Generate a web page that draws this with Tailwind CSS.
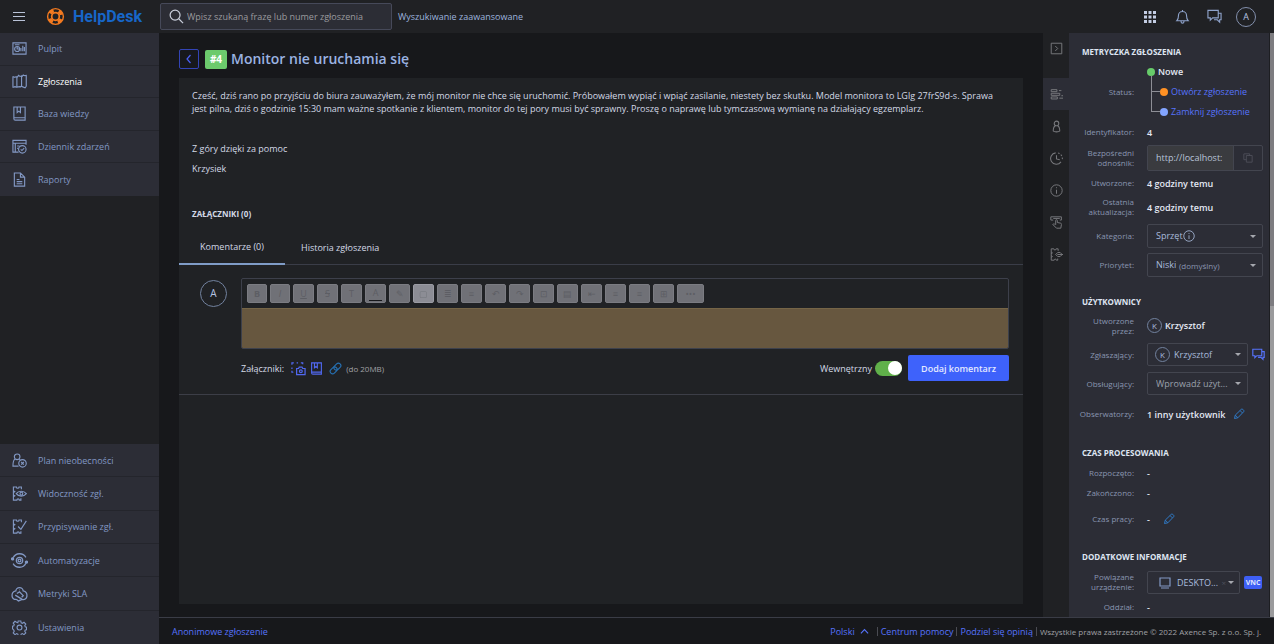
<!DOCTYPE html>
<html lang="pl">
<head>
<meta charset="utf-8">
<title>HelpDesk</title>
<script src="https://cdn.jsdelivr.net/npm/@tailwindcss/browser@4"></script>
</head>
<body class="flex h-screen flex-col overflow-hidden bg-[#17181b] font-['Open_Sans',sans-serif] text-[9px] leading-[13px] text-[#d3d9e6]">

<svg class="hidden">
  <symbol id="chat" viewBox="0 0 16 16"><path d="M1 1.500h11v8H6l-2.500 2.500V9.500H1zM12 4.500h3v7h-1.500V14l-2.500-2.500H7.500" /></symbol>
  <symbol id="pencil" viewBox="0 0 16 16"><path d="M2 14l1-4.500L11 1.800a1.300 1.300 0 0 1 2 0l1.200 1.200a1.300 1.300 0 0 1 0 2L6.500 13zM3 9.500L6.500 13M9.500 3.500l3 3"/></symbol>
  <symbol id="book" viewBox="0 0 16 16"><path d="M2 1h12v14H3.500A1.500 1.500 0 0 1 2 13.500zM2 12.500h12M5.500 1v6l1.800-1.500L9 7V1"/></symbol>
  <symbol id="info" viewBox="0 0 16 16"><circle cx="8" cy="8" r="7"/><path d="M8 7v5M8 4v1.200"/></symbol>
  <symbol id="ticket" viewBox="0 0 16 16"><path d="M9.500 13V15H7.800a1.300 1.300 0 0 0-2.600 0H1.500V1h3.200a1.400 1.400 0 0 0 2.800 0H10v2.500M1.500 5l1.500 1-1.500 1M1.500 9.500l1.500 1-1.500 1"/></symbol>
</svg>

<header class="flex h-[33px] shrink-0 items-center bg-[#202124]">
  <div class="flex w-[160px] items-center pl-[13px]">
    <button aria-label="Menu" class="flex w-[12px] flex-col gap-[3px]"><span class="h-px bg-[#b9c3d8]"></span><span class="h-px bg-[#b9c3d8]"></span><span class="h-px bg-[#b9c3d8]"></span></button>
    <svg class="ml-[21px] size-[19px]" viewBox="0 0 20 20" fill="none" stroke="#f37a20"><circle cx="10" cy="10" r="8.300" stroke-width="1.500"/><circle cx="10" cy="10" r="4" stroke-width="1.800"/><circle cx="10" cy="10" r="6.400" stroke-width="3.600" stroke-dasharray="4.500 5.550" stroke-dashoffset="-2.750"/></svg>
    <a href="#" class="ml-[8px] font-['Roboto',sans-serif] text-[16px] leading-5 font-bold text-[#1766c8]">HelpDesk</a>
  </div>
  <label class="flex h-[27px] w-[232px] items-center rounded-[2px] border border-[#464959] bg-[#2c2d35] pl-2">
    <svg class="size-[15px]" viewBox="0 0 16 16" fill="none" stroke="#c9cedb" stroke-width="1.300"><circle cx="6.500" cy="6.500" r="5.300"/><path d="M10.400 10.400L15 15"/></svg>
    <input type="search" aria-label="Szukaj" placeholder="Wpisz szukaną frazę lub numer zgłoszenia" class="ml-[3px] min-w-0 flex-1 bg-transparent outline-none placeholder:text-[#9b9b9f]">
  </label>
  <a href="#" class="ml-[6px] text-[#9db4df]">Wyszukiwanie zaawansowane</a>
  <div class="ml-auto flex items-center gap-[12px] pr-[18px] [&>button]:flex [&>button]:size-[20px] [&>button]:items-center [&>button]:justify-center">
    <button aria-label="Aplikacje"><svg class="size-[12px]" viewBox="0 0 12 12" fill="#c4cee4"><path d="M0 0h3v3H0zM4.500 0h3v3h-3zM9 0h3v3H9zM0 4.500h3v3H0zM4.500 4.500h3v3h-3zM9 4.500h3v3H9zM0 9h3v3H0zM4.500 9h3v3h-3zM9 9h3v3H9z"/></svg></button>
    <button aria-label="Powiadomienia"><svg class="size-[15px]" viewBox="0 0 16 16" fill="none" stroke="#8ea3cb" stroke-width="1.200"><path d="M2 12.500c1.500-1.500 1.700-3 1.700-5.500a4.300 4.300 0 0 1 8.600 0c0 2.500.2 4 1.700 5.500zM6.500 13v.5a1.500 1.500 0 0 0 3 0V13M8 2.500V1"/></svg></button>
    <button aria-label="Czat"><svg class="size-[15px]" fill="none" stroke="#8ea3cb" stroke-width="1.200"><use href="#chat"/></svg></button>
    <button class="rounded-full border border-[#8390ad] text-[#b5c4e3]">A</button>
  </div>
</header>

<div class="flex min-h-0 flex-1">
  <nav class="flex w-[159px] shrink-0 flex-col justify-between bg-[#202124] text-[#8298c4]">
    <div class="grid h-[163px] grid-rows-5 divide-y divide-[#24252c] bg-[#2c2d36]">
      <a href="#" class="flex items-center gap-[11px] pl-[12px]"><svg class="size-[15px]" viewBox="0 0 16 16" fill="none" stroke="currentColor" stroke-width="1.200"><path d="M1 2h14v12H1zM9.500 11V7.500M11.500 11V5M13.200 11V6.500M3 4h5"/><circle cx="5.500" cy="8.500" r="2.700"/><path d="M5.500 6v2.500H8"/></svg>Pulpit</a>
      <a href="#" class="flex items-center gap-[11px] pl-[12px] font-medium text-white"><svg class="size-[15px] text-[#8298c4]" viewBox="0 0 16 16" fill="none" stroke="currentColor" stroke-width="1.200"><path d="M1 3h1a1.200 1.200 0 0 0 2 0h1.200v11H4.200a1.200 1.200 0 0 0-2 0H1zM5.200 4L7 1.500l.8.600a1.200 1.200 0 0 0 1.600.2L10.200 2v10.500l-1 1.300-1-.3L5.200 14M10.200 3.500L12 1l.8.500a1.200 1.200 0 0 0 1.400.1L15.200 1.500V13l-1.200 1.800-3.800-1.600"/></svg>Zgłoszenia</a>
      <a href="#" class="flex items-center gap-[11px] pl-[12px]"><svg class="size-[15px]" fill="none" stroke="currentColor" stroke-width="1.200"><use href="#book"/></svg>Baza wiedzy</a>
      <a href="#" class="flex items-center gap-[11px] pl-[12px]"><svg class="size-[15px]" viewBox="0 0 16 16" fill="none" stroke="currentColor" stroke-width="1.200"><path d="M7 14H1V1.500h14V6M1 4.500h14M3.500 4.500V14M5.500 7.500h2.500M5.500 10h1"/><circle cx="11" cy="11" r="4"/><path d="M9.300 11l1.300 1.300L13 9.800"/></svg>Dziennik zdarzeń</a>
      <a href="#" class="flex items-center gap-[11px] pl-[12px]"><svg class="size-[15px]" viewBox="0 0 16 16" fill="none" stroke="currentColor" stroke-width="1.200"><path d="M2.500 1H9l4.500 4.500V15h-11zM9 1v4.500h4.500M5 8h3M5 10.300h6M5 12.500h6"/></svg>Raporty</a>
    </div>
    <div class="grid h-[200px] grid-rows-6 divide-y divide-[#24252c] bg-[#2c2d36]">
      <a href="#" class="flex items-center gap-[11px] pl-[12px]"><svg class="size-[15px]" viewBox="0 0 16 16" fill="none" stroke="currentColor" stroke-width="1.200"><circle cx="5.500" cy="4" r="3"/><path d="M3.300 6.300C1.500 7.500 1 10 1 14h6M7.700 6.300l1 1"/><circle cx="11.200" cy="11" r="4"/><path d="M9.800 9.600l2.800 2.800M12.600 9.600l-2.800 2.800"/></svg>Plan nieobecności</a>
      <a href="#" class="flex items-center gap-[11px] pl-[12px]"><svg class="size-[15px]" viewBox="0 0 16 16" fill="none" stroke="currentColor" stroke-width="1.200"><use href="#ticket"/><path d="M4.500 8.200C7 4.800 12.500 4.800 15.300 8.200 12.500 11.600 7 11.600 4.500 8.200z"/><circle cx="10" cy="8.200" r="1.500"/></svg>Widoczność zgł.</a>
      <a href="#" class="flex items-center gap-[11px] pl-[12px]"><svg class="size-[15px]" viewBox="0 0 16 16" fill="none" stroke="currentColor" stroke-width="1.200"><use href="#ticket"/><path d="M6.500 8l3 3L15.300 2"/></svg>Przypisywanie zgł.</a>
      <a href="#" class="flex items-center gap-[10px] pl-[11px]"><svg class="size-[17px]" viewBox="0 0 16 16" fill="none" stroke="currentColor" stroke-width="1.200"><path d="M2 5.500A6.800 6.800 0 0 1 14 5M14 10.500A6.800 6.800 0 0 1 2 11"/><circle cx="8" cy="8" r="3"/><circle cx="8" cy="8" r="1.300"/><circle cx="1.500" cy="6.500" r="1" fill="currentColor"/><circle cx="14.500" cy="9.500" r="1" fill="currentColor"/></svg>Automatyzacje</a>
      <a href="#" class="flex items-center gap-[10px] pl-[11px]"><svg class="size-[17px]" viewBox="0 0 16 16" fill="none" stroke="currentColor" stroke-width="1.200"><path d="M4.500 6a3.500 3.500 0 1 1 7 0M4.500 5.500C2 6 .8 8 1 10.500c.2 2 2 3.500 4 3M11.500 5.500C14 6 15.200 8 15 10.500c-.2 2.500-2.500 3.800-4.500 3L4 9.500M5 13.500l2 1.500 3.500-1.500M5.500 8L8 6.500l3.500 3.500L10 11.500M8 4.500h.5"/></svg>Metryki SLA</a>
      <a href="#" class="flex items-center gap-[11px] pl-[12px]"><svg class="size-[15px]" viewBox="0 0 16 16" fill="none" stroke="currentColor" stroke-width="1.200"><path d="M6.600 1h2.800l.4 2 1.300.5 1.700-1.100 1.900 1.900-1.100 1.700.5 1.300 1.400.4v2.700l-1.400.3-.5 1.300 1.100 1.700-1.900 1.900-1.700-1.100-1.300.5-.4 1.700H6.600l-.4-1.700-1.300-.5-1.700 1.100-1.900-1.900 1.100-1.700-.5-1.300L.6 9.400V6.700l1.300-.4.5-1.300-1.100-1.700 1.900-1.900 1.700 1.100L6.200 3z"/><circle cx="8" cy="8" r="2.600"/></svg>Ustawienia</a>
    </div>
  </nav>

  <div class="flex min-w-0 flex-1 flex-col">
    <div class="flex min-h-0 flex-1">
      <main class="flex min-w-0 flex-1 flex-col px-[20px] pb-[13px]">
        <div class="flex h-[45px] items-center pt-[7px]">
          <button aria-label="Wstecz" class="flex size-[20px] items-center justify-center rounded-[2px] border border-[#3344b5]"><svg class="size-[10px]" viewBox="0 0 10 10" fill="none" stroke="#4a60f5" stroke-width="1.200"><path d="M6.500 1L3 5l3.500 4"/></svg></button>
          <span class="ml-[6px] flex h-[19px] w-[22px] items-center justify-center rounded-[2px] bg-[#6cca6c] text-[10px] font-bold text-white">#4</span>
          <h1 class="ml-[4px] text-[14px] leading-5 font-semibold text-[#9bb3e2]">Monitor nie uruchamia się</h1>
        </div>
        <div class="flex flex-1 flex-col bg-[#202225]">
          <div class="px-[13px] pt-[11px]">
            <p>Cześć, dziś rano po przyjściu do biura zauważyłem, że mój monitor nie chce się uruchomić. Próbowałem wypiąć i wpiąć zasilanie, niestety bez skutku. Model monitora to LGlg 27frS9d-s. Sprawa<br>jest pilna, dziś o godzinie 15:30 mam ważne spotkanie z klientem, monitor do tej pory musi być sprawny. Proszę o naprawę lub tymczasową wymianę na działający egzemplarz.</p>
            <p class="mt-[27px]">Z góry dzięki za pomoc</p>
            <p class="mt-[7px]">Krzysiek</p>
            <h2 class="mt-[32px] text-[8px] font-bold">ZAŁĄCZNIKI (0)</h2>
          </div>
          <div class="mt-[10px] flex border-b border-[#3a3d48]" role="tablist">
            <button role="tab" aria-selected="true" class="-mb-px h-[35px] w-[106px] border-b-2 border-[#7f9cc7]">Komentarze (0)</button>
            <button role="tab" class="h-[34px] px-[16px]">Historia zgłoszenia</button>
          </div>
          <form class="flex gap-[14px] border-b border-[#3c3e47] pt-[13px] pr-[14px] pb-[13px] pl-[21px]">
            <span class="mt-[2px] flex size-[27px] shrink-0 items-center justify-center rounded-full border border-[#72829f] text-[10px] text-[#b5c4e3]">A</span>
            <div class="min-w-0 flex-1">
              <div class="overflow-hidden rounded-[2px] border border-[#3d404b]">
                <div class="flex h-[29px] items-center gap-[3px] pl-[5px] text-[#5d5e64] [&>button]:flex [&>button]:h-[19px] [&>button]:w-[21px] [&>button]:items-center [&>button]:justify-center [&>button]:rounded-[2px] [&>button]:border [&>button]:border-[#7b7c82] [&>button]:bg-[#707177]">
                  <button type="button" class="max-w-[20px] font-bold">B</button>
                  <button type="button" class="max-w-[20px] italic">I</button>
                  <button type="button" class="underline">U</button>
                  <button type="button" class="line-through">S</button>
                  <button type="button">T</button>
                  <button type="button"><span class="flex h-[15px] w-[13px] justify-center border-b border-[#17181b]">A</span></button>
                  <button type="button">✎</button>
                  <button type="button" class="brightness-125">▢</button>
                  <button type="button">≣</button>
                  <button type="button">≡</button>
                  <button type="button">↶</button>
                  <button type="button">↷</button>
                  <button type="button">⊡</button>
                  <button type="button">▤</button>
                  <button type="button">⇤</button>
                  <button type="button">≡</button>
                  <button type="button">≡</button>
                  <button type="button">⊞</button>
                  <button type="button" class="min-w-[27px]">•••</button>
                </div>
                <textarea aria-label="Komentarz" class="block h-[40px] w-full resize-none border-t border-[#756547] bg-[#67573f] p-2 outline-none"></textarea>
              </div>
              <div class="mt-[6px] flex h-[26px] items-center">
                <span>Załączniki:</span>
                <button type="button" aria-label="Zrzut ekranu" class="ml-[7px]"><svg class="size-[15px]" viewBox="0 0 16 16" fill="none" stroke="#5068f0" stroke-width="1.300"><path d="M1 4V2h2M6 2h1.500M10.500 2h2v1.500M1 7v1.500M1 10.500v1.500h1.500M6 8h2l.8-1.500h3L12.500 8H15v6.500H6z"/><circle cx="10.500" cy="11" r="1.500"/></svg></button>
                <button type="button" aria-label="Baza wiedzy" class="ml-[4px]"><svg class="size-[13px]" fill="none" stroke="#5068f0" stroke-width="1.400"><use href="#book"/></svg></button>
                <button type="button" aria-label="Dodaj plik" class="ml-[6px]"><svg class="size-[13px]" viewBox="0 0 16 16" fill="none" stroke="#2671b4" stroke-width="1.400"><g transform="rotate(-45 8 8)"><rect x="0" y="5" width="9.500" height="6" rx="3"/><rect x="6.500" y="5" width="9.500" height="6" rx="3"/></g></svg></button>
                <span class="ml-[4px] text-[8px] text-[#a0a1a6]">(do 20MB)</span>
                <label class="ml-auto flex items-center gap-[3px]">Wewnętrzny
                  <input type="checkbox" role="switch" checked class="flex h-[15px] w-[27px] appearance-none items-center justify-end rounded-full bg-[#60b04a] after:size-[14px] after:rounded-full after:bg-white">
                </label>
                <button type="submit" class="ml-[6px] h-[26px] w-[101px] rounded-[2px] bg-[#3e62fb] font-semibold text-[#e4e9ff]">Dodaj komentarz</button>
              </div>
            </div>
          </form>
        </div>
      </main>

      <aside class="flex w-[26px] shrink-0 flex-col items-center bg-[#202124] text-[#77787c] [&_svg]:size-[13px] [&_svg]:fill-none [&_svg]:stroke-current">
        <button aria-label="Zwiń" class="mb-[14px] flex h-[31px] items-center"><svg viewBox="0 0 16 16" stroke-width="1.200"><path d="M1.500 1.500h13v13h-13zM6.500 5l3 3-3 3"/></svg></button>
        <button aria-label="Metryczka" class="flex h-[32px] w-full items-center justify-center bg-[#2c2d36]"><svg viewBox="0 0 16 16" stroke-width="1.200"><path d="M1.500 2h7v2.500h-7zM1.500 6.500H12V9H1.500zM1.500 11H9v2.500H1.500zM11 3.200h3M14 9.500h2M11.500 12.500H16"/></svg></button>
        <button aria-label="Użytkownicy" class="flex h-[32px] items-center"><svg viewBox="0 0 16 16" stroke-width="1.300"><circle cx="8" cy="4.200" r="2.800"/><path d="M6.500 7C4.500 8 4 11 4 13.500 5 15 11 15 12 13.500 12 11 11.500 8 9.500 7"/></svg></button>
        <button aria-label="Czas" class="flex h-[32px] items-center"><svg viewBox="0 0 16 16" stroke-width="1.300"><path d="M7 1.100a7 7 0 1 0 6.500 11M8 4v4.500l4 1"/><path d="M10 1.300a7 7 0 0 1 5 8.500" stroke-dasharray="2 1.800"/></svg></button>
        <button aria-label="Informacje" class="flex h-[32px] items-center"><svg stroke-width="1.200"><use href="#info"/></svg></button>
        <button aria-label="Akcje" class="flex h-[32px] items-center"><svg viewBox="0 0 16 16" stroke-width="1.200"><path d="M4 5H1V1h13v4h-2M4 3h8M7 11V5.500a1 1 0 0 1 2 0V8l4 .8c1.200.3 1.200 1 1 2l-.7 4.200H8L3.500 10.500c.5-1 1.500-1 2.500-.3"/></svg></button>
        <button aria-label="Powiązane" class="flex h-[32px] items-center"><svg viewBox="0 0 16 16" stroke-width="1.200"><use href="#ticket"/><path d="M9.500 5.500h3l2.500 2.500-2.500 2.500h-3L7 8zM9 8h7"/></svg></button>
      </aside>

      <aside class="w-[200px] shrink-0 overflow-hidden bg-[#2c2d36] pt-[8px] pr-[7px] pl-[13px] text-[#8995b0] [&_dl>div]:grid [&_dl>div]:grid-cols-[52px_1fr] [&_dl>div]:items-center [&_dl>div]:gap-x-[13px] [&_dt]:flex [&_dt]:justify-end [&_dt]:text-right [&_dt]:text-[8px] [&_dt]:leading-[10px] [&_h2]:flex [&_h2]:h-[20px] [&_h2]:items-center [&_h2]:text-[8px] [&_h2]:font-bold [&_h2]:text-[#dfe5f2]">
        <h2>METRYCZKA ZGŁOSZENIA</h2>
        <dl>
          <div class="h-[61px]"><dt>Status:</dt>
            <dd class="grid grid-rows-3">
              <span class="flex h-[20px] items-center font-semibold text-[#e3e8f3]"><span class="mr-[3px] size-[8px] rounded-full bg-[#67cb6a]"></span>Nowe</span>
              <button class="relative ml-[4px] flex h-[20px] items-center text-[#5673fb]"><span class="absolute -top-[6px] left-0 h-[36px] w-px bg-[#8d8e96]"></span><span class="h-px w-[9px] bg-[#8d8e96]"></span><span class="mr-[3px] size-[8px] shrink-0 rounded-full bg-[#ff9124]"></span>Otwórz zgłoszenie</button>
              <button class="ml-[4px] flex h-[20px] items-center text-[#5673fb]"><span class="h-px w-[9px] bg-[#8d8e96]"></span><span class="mr-[3px] size-[8px] shrink-0 rounded-full bg-[#83a5ff]"></span>Zamknij zgłoszenie</button>
            </dd></div>
          <div class="h-[20px]"><dt>Identyfikator:</dt><dd class="font-semibold text-[#e3e8f3]">4</dd></div>
          <div class="h-[31px]"><dt><label for="url">Bezpośredni odnośnik:</label></dt>
            <dd class="flex h-[26px] w-[116px] rounded-[2px] border border-[#43454f]"><input id="url" readonly value="http://localhost:" class="w-[85px] bg-[#3a3b3f] pl-[8px] text-[#b8c3d8] outline-none"><button aria-label="Kopiuj" class="flex flex-1 items-center justify-center border-l border-[#43454f]"><svg class="size-[10px]" viewBox="0 0 12 12" fill="none" stroke="#50525b"><path d="M4 3h7v8H4zM8 3V1H1v7h3"/></svg></button></dd></div>
          <div class="h-[20px]"><dt>Utworzone:</dt><dd class="font-semibold text-[#e3e8f3]">4 godziny temu</dd></div>
          <div class="h-[28px]"><dt>Ostatnia aktualizacja:</dt><dd class="font-semibold text-[#e3e8f3]">4 godziny temu</dd></div>
          <div class="h-[29px]"><dt><label for="cat">Kategoria:</label></dt>
            <dd class="relative w-[116px]"><select id="cat" class="h-[24px] w-full appearance-none rounded-[2px] border border-[#43454f] pl-[8px] text-[#a9bbdc]"><option>Sprzęt</option></select><svg class="absolute top-[6px] left-[36px] size-[12px]" fill="none" stroke="#a9bbdc" stroke-width="1.100"><use href="#info"/></svg><span class="absolute top-[11px] right-[7px] border-x-[3px] border-t-[3px] border-x-transparent border-t-[#a5a7ae]"></span></dd></div>
          <div class="h-[29px]"><dt><label for="prio">Priorytet:</label></dt>
            <dd class="relative w-[116px]"><select id="prio" class="h-[24px] w-full appearance-none rounded-[2px] border border-[#43454f] pl-[8px] text-[#a9bbdc]"><option>Niski</option></select><span class="absolute top-[6px] left-[32px] text-[8px]">(domyślny)</span><span class="absolute top-[11px] right-[7px] border-x-[3px] border-t-[3px] border-x-transparent border-t-[#a5a7ae]"></span></dd></div>
        </dl>
        <h2 class="mt-[12px]">UŻYTKOWNICY</h2>
        <dl>
          <div class="h-[29px]"><dt>Utworzone przez:</dt><dd class="flex items-center gap-[3px] font-semibold text-[#e3e8f3]"><span class="flex size-[15px] items-center justify-center rounded-full border border-[#72829f] text-[8px] font-normal text-[#a9bbdc]">K</span>Krzysztof</dd></div>
          <div class="h-[29px]"><dt><label for="rep">Zgłaszający:</label></dt>
            <dd class="flex items-center gap-[4px]"><span class="relative w-[101px]"><select id="rep" class="h-[23px] w-full appearance-none rounded-[2px] border border-[#43454f] pl-[26px] text-[#a9bbdc]"><option>Krzysztof</option></select><span class="absolute top-[4px] left-[8px] flex size-[15px] items-center justify-center rounded-full border border-[#72829f] text-[8px] text-[#a9bbdc]">K</span><span class="absolute top-[10px] right-[7px] border-x-[3px] border-t-[3px] border-x-transparent border-t-[#a5a7ae]"></span></span><button aria-label="Czat"><svg class="size-[13px]" fill="none" stroke="#5673fb" stroke-width="1.400"><use href="#chat"/></svg></button></dd></div>
          <div class="h-[29px]"><dt><label for="agent">Obsługujący:</label></dt>
            <dd class="relative w-[101px]"><select id="agent" class="h-[23px] w-full appearance-none rounded-[2px] border border-[#43454f] pl-[8px] text-[#9ba0ac]"><option>Wprowadź użyt...</option></select><span class="absolute top-[10px] right-[7px] border-x-[3px] border-t-[3px] border-x-transparent border-t-[#a5a7ae]"></span></dd></div>
          <div class="h-[32px]"><dt class="whitespace-nowrap">Obserwatorzy:</dt><dd class="flex items-center gap-[8px] font-semibold whitespace-nowrap text-[#e3e8f3]">1 inny użytkownik<button aria-label="Edytuj obserwatorów"><svg class="size-[12px]" fill="none" stroke="#2e7ac8" stroke-width="1.300"><use href="#pencil"/></svg></button></dd></div>
        </dl>
        <h2 class="mt-[12px]">CZAS PROCESOWANIA</h2>
        <dl class="pt-px">
          <div class="h-[20px]"><dt>Rozpoczęto:</dt><dd class="font-semibold text-[#e3e8f3]">-</dd></div>
          <div class="h-[20px]"><dt>Zakończono:</dt><dd class="font-semibold text-[#e3e8f3]">-</dd></div>
          <div class="h-[32px]"><dt>Czas pracy:</dt><dd class="flex items-center gap-[13px] font-semibold text-[#e3e8f3]">-<button aria-label="Edytuj czas pracy"><svg class="size-[12px]" fill="none" stroke="#2e7ac8" stroke-width="1.300"><use href="#pencil"/></svg></button></dd></div>
        </dl>
        <h2 class="mt-[11px]">DODATKOWE INFORMACJE</h2>
        <dl class="pt-px">
          <div class="h-[30px]"><dt><label for="dev">Powiązane urządzenie:</label></dt>
            <dd class="flex items-center gap-[4px]"><span class="relative w-[93px]"><select id="dev" class="h-[23px] w-full appearance-none rounded-[2px] border border-[#43454f] pl-[29px] text-[#a9bbdc]"><option>DESKTO...</option></select><svg class="absolute top-[6px] left-[12px] size-[12px]" viewBox="0 0 12 12" fill="none" stroke="#8298c4" stroke-width="1.200"><path d="M1 1h10v8H1zM2 11h8"/></svg><span class="absolute top-[5px] right-[14px] text-[8px] text-[#4d505c]">×</span><span class="absolute top-[10px] right-[6px] border-x-[3px] border-t-[3px] border-x-transparent border-t-[#a5a7ae]"></span></span><button class="h-[13px] w-[18px] rounded-[2px] bg-[#3e5ff5] text-[7px] leading-[13px] font-bold text-[#dfe5ff]">VNC</button></dd></div>
          <div class="h-[20px]"><dt>Oddział:</dt><dd class="font-semibold text-[#e3e8f3]">-</dd></div>
        </dl>
      </aside>
      <div class="w-[5px] shrink-0 border-l border-[#1d1e22] bg-[#9a9a9c]"><div class="h-[273px] bg-[#7d7c80]"></div></div>
    </div>

    <footer class="flex h-[27px] shrink-0 items-center border-t border-[#3a3c46] pr-[13px] pl-[13px] text-[#5673fb]">
      <a href="#">Anonimowe zgłoszenie</a>
      <div class="ml-auto flex items-center gap-[3px]">
        <button class="mr-[5px] flex items-center gap-[5px]">Polski<svg class="size-[9px]" viewBox="0 0 10 10" fill="none" stroke="currentColor" stroke-width="1.300"><path d="M1 7l4-4 4 4"/></svg></button>
        <span class="h-[9px] w-px bg-[#4a4b52]"></span>
        <a href="#">Centrum pomocy</a>
        <span class="h-[9px] w-px bg-[#4a4b52]"></span>
        <a href="#">Podziel się opinią</a>
        <span class="h-[9px] w-px bg-[#4a4b52]"></span>
        <span class="text-[8px] text-[#a0a1a6]">Wszystkie prawa zastrzeżone © 2022 Axence Sp. z o.o. Sp. j.</span>
      </div>
    </footer>
  </div>
</div>
</body>
</html>
